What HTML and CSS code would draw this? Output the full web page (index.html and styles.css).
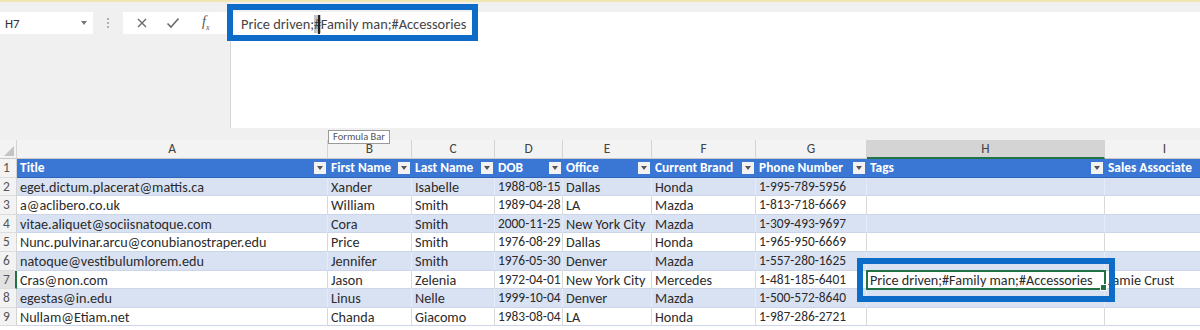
FILE: index.html
```html
<!DOCTYPE html>
<html lang="en">
<head>
    <meta charset="UTF-8">
    <title>Sales Contacts - Excel</title>
    <link rel="stylesheet" href="styles.css">
</head>
<body>

    <!-- Formula bar area -->
    <div class="formula-area">
        <div class="name-box">
            <span>H7</span>
            <span class="caret"></span>
        </div>
        <div class="grip"><i></i><i></i><i></i></div>
        <div class="fx-buttons">
            <svg class="btn-cancel" width="12" height="12" viewBox="0 0 12 12"><path d="M2 2 L10 10 M10 2 L2 10" stroke="#6b6b6b" stroke-width="1.4" fill="none"/></svg>
            <svg class="btn-enter" width="14" height="12" viewBox="0 0 14 12"><path d="M1.5 6.5 L5 10 L12.5 1.5" stroke="#6b6b6b" stroke-width="1.6" fill="none"/></svg>
            <span class="fx">f<sub>x</sub></span>
        </div>
        <div class="formula-bar">Price driven;<span class="sel">#</span><span class="cursor"></span>Family man;#Accessories</div>
    </div>

    <!-- Grid -->
    <div class="sheet">
        <div class="corner"><span></span></div>
        <div class="col-head">A</div>
        <div class="col-head">B</div>
        <div class="col-head">C</div>
        <div class="col-head">D</div>
        <div class="col-head">E</div>
        <div class="col-head">F</div>
        <div class="col-head">G</div>
        <div class="col-head active">H</div>
        <div class="col-head">I</div>

        <div class="row-head">1</div>
        <div class="cell th">Title<b class="filter"></b></div>
        <div class="cell th">First Name<b class="filter"></b></div>
        <div class="cell th">Last Name<b class="filter"></b></div>
        <div class="cell th">DOB<b class="filter"></b></div>
        <div class="cell th">Office<b class="filter"></b></div>
        <div class="cell th">Current Brand<b class="filter"></b></div>
        <div class="cell th">Phone Number<b class="filter"></b></div>
        <div class="cell th">Tags<b class="filter"></b></div>
        <div class="cell th">Sales Associate<b class="filter"></b></div>

        <div class="row-head">2</div>
        <div class="cell band">eget.dictum.placerat@mattis.ca</div>
        <div class="cell band">Xander</div>
        <div class="cell band">Isabelle</div>
        <div class="cell band num">1988-08-15</div>
        <div class="cell band">Dallas</div>
        <div class="cell band">Honda</div>
        <div class="cell band num">1-995-789-5956</div>
        <div class="cell band"></div>
        <div class="cell band"></div>

        <div class="row-head">3</div>
        <div class="cell">a@aclibero.co.uk</div>
        <div class="cell">William</div>
        <div class="cell">Smith</div>
        <div class="cell num">1989-04-28</div>
        <div class="cell">LA</div>
        <div class="cell">Mazda</div>
        <div class="cell num">1-813-718-6669</div>
        <div class="cell"></div>
        <div class="cell"></div>

        <div class="row-head">4</div>
        <div class="cell band">vitae.aliquet@sociisnatoque.com</div>
        <div class="cell band">Cora</div>
        <div class="cell band">Smith</div>
        <div class="cell band num">2000-11-25</div>
        <div class="cell band">New York City</div>
        <div class="cell band">Mazda</div>
        <div class="cell band num">1-309-493-9697</div>
        <div class="cell band"></div>
        <div class="cell band"></div>

        <div class="row-head">5</div>
        <div class="cell">Nunc.pulvinar.arcu@conubianostraper.edu</div>
        <div class="cell">Price</div>
        <div class="cell">Smith</div>
        <div class="cell num">1976-08-29</div>
        <div class="cell">Dallas</div>
        <div class="cell">Honda</div>
        <div class="cell num">1-965-950-6669</div>
        <div class="cell"></div>
        <div class="cell"></div>

        <div class="row-head">6</div>
        <div class="cell band">natoque@vestibulumlorem.edu</div>
        <div class="cell band">Jennifer</div>
        <div class="cell band">Smith</div>
        <div class="cell band num">1976-05-30</div>
        <div class="cell band">Denver</div>
        <div class="cell band">Mazda</div>
        <div class="cell band num">1-557-280-1625</div>
        <div class="cell band"></div>
        <div class="cell band"></div>

        <div class="row-head current">7</div>
        <div class="cell">Cras@non.com</div>
        <div class="cell">Jason</div>
        <div class="cell">Zelenia</div>
        <div class="cell num">1972-04-01</div>
        <div class="cell">New York City</div>
        <div class="cell">Mercedes</div>
        <div class="cell num">1-481-185-6401</div>
        <div class="cell selected">Price driven;#Family man;#Accessories</div>
        <div class="cell">Jamie Crust</div>

        <div class="row-head">8</div>
        <div class="cell band">egestas@in.edu</div>
        <div class="cell band">Linus</div>
        <div class="cell band">Nelle</div>
        <div class="cell band num">1999-10-04</div>
        <div class="cell band">Denver</div>
        <div class="cell band">Mazda</div>
        <div class="cell band num">1-500-572-8640</div>
        <div class="cell band"></div>
        <div class="cell band"></div>

        <div class="row-head">9</div>
        <div class="cell">Nullam@Etiam.net</div>
        <div class="cell">Chanda</div>
        <div class="cell">Giacomo</div>
        <div class="cell num">1983-08-04</div>
        <div class="cell">LA</div>
        <div class="cell">Honda</div>
        <div class="cell num">1-987-286-2721</div>
        <div class="cell"></div>
        <div class="cell"></div>
    </div>

    <!-- Overlays: tooltip and highlight boxes -->
    <div class="tooltip">Formula Bar</div>
    <div class="focus-box formula-focus"></div>
    <div class="focus-box cell-focus"></div>

</body>
</html>
```

FILE: styles.css
```css
body {
    margin: 0;
    width: 1200px;
    height: 330px;
    overflow: hidden;
    position: relative;
    background-color: #ffffff;
    font-family: Carlito, Lato, "Liberation Sans", sans-serif;
    color: #2b2b2b;
}

/* Formula bar */
.formula-area {
    height: 140px;
    box-sizing: border-box;
    border-top: 2px solid #efe6b4;
    background-color: #f0f0f0;
    display: flex;
    align-items: flex-start;
    padding-top: 10px;
}

.name-box {
    width: 93px;
    height: 22px;
    box-sizing: border-box;
    background-color: #fff;
    display: flex;
    align-items: center;
    justify-content: space-between;
    padding: 0 6px 0 5px;
    font-size: 13px;
    color: #333;
}

.caret {
    border-left: 3px solid transparent;
    border-right: 3px solid transparent;
    border-top: 4px solid #777;
}

.grip {
    width: 30px;
    height: 22px;
    display: flex;
    flex-direction: column;
    align-items: center;
    justify-content: center;
    gap: 2px;
}

.grip i {
    width: 2px;
    height: 2px;
    background-color: #b0b0b0;
}

.fx-buttons {
    width: 104px;
    height: 22px;
    background-color: #fff;
    display: flex;
    align-items: center;
    padding-left: 13px;
    box-sizing: border-box;
}

.btn-enter {
    margin-left: 18px;
}

.fx {
    margin-left: 22px;
    font-family: "Liberation Serif", serif;
    font-style: italic;
    font-size: 14px;
    color: #555;
}

.fx sub {
    font-size: 8px;
}

.formula-bar {
    flex: 1;
    height: 116px;
    margin-left: 3px;
    box-sizing: border-box;
    background-color: #fff;
    border-left: 1px solid #d6d6d6;
    padding: 2px 0 0 10px;
    font-size: 14.4px;
    line-height: 20px;
    color: #444;
    white-space: nowrap;
}

.sel {
    background-color: #c4c4c4;
}

.cursor {
    display: inline-block;
    width: 1.5px;
    height: 19px;
    margin-left: -3px;
    margin-right: 1px;
    vertical-align: -5px;
    background-color: #222;
}

/* Sheet grid */
.sheet {
    display: grid;
    grid-template-columns: 17px 311px 84px 83px 68px 89px 104px 111px 238px 120px;
    grid-template-rows: 19px;
    grid-auto-rows: 18.6px;
    font-size: 14.2px;
}

.corner {
    background-color: #f3f3f3;
    border-right: 1px solid #d4d4d4;
    border-bottom: 1px solid #c8c8c8;
    display: flex;
    align-items: flex-end;
    justify-content: flex-end;
    padding: 0 2px 2px 0;
}

.corner span {
    width: 0;
    height: 0;
    border-left: 10px solid transparent;
    border-bottom: 10px solid #c4c4c4;
}

.col-head {
    background-color: #f3f3f3;
    border-right: 1px solid #d4d4d4;
    border-bottom: 1px solid #c8c8c8;
    text-align: center;
    font-size: 13.4px;
    line-height: 18px;
    color: #444;
}

.col-head.active {
    background-color: #d4d4d4;
    border-bottom: 2px solid #217346;
}

.row-head {
    background-color: #f3f3f3;
    border-right: 1px solid #d4d4d4;
    border-bottom: 1px solid #dcdcdc;
    font-size: 13.4px;
    line-height: 18px;
    color: #555;
    padding-left: 3px;
}

.row-head.current {
    border-right: 2px solid #217346;
    background-color: #e2e2e2;
}

.cell {
    position: relative;
    box-sizing: border-box;
    padding-left: 3px;
    line-height: 18px;
    white-space: nowrap;
    overflow: hidden;
    background-color: #fff;
    border-right: 1px solid #d9d9d9;
    border-bottom: 1px solid #cdd6e9;
}

.cell.num {
    font-size: 13.4px;
}

.cell.band {
    background-color: #d9e2f3;
    border-right-color: #e6ecf7;
}

.cell.th {
    background-color: #3a77d4;
    color: #fff;
    font-weight: bold;
    font-size: 13.4px;
    border-right: none;
    border-bottom: 1px solid #2f66bb;
}

.filter {
    position: absolute;
    right: 2px;
    top: 3px;
    width: 12px;
    height: 12px;
    background-color: #f2f2f2;
    display: flex;
    align-items: center;
    justify-content: center;
}

.filter::after {
    content: "";
    border-left: 3px solid transparent;
    border-right: 3px solid transparent;
    border-top: 4px solid #555;
}

.cell.selected {
    overflow: visible;
    outline: 2px solid #217346;
    outline-offset: -1px;
    z-index: 1;
}

.cell.selected::after {
    content: "";
    position: absolute;
    right: -3px;
    bottom: -3px;
    width: 5px;
    height: 5px;
    background-color: #217346;
    border: 1px solid #fff;
}

/* Overlays */
.tooltip {
    position: absolute;
    left: 328px;
    top: 130px;
    width: 62px;
    height: 14px;
    box-sizing: border-box;
    background-color: #fff;
    border: 1px solid #9a9a9a;
    font-size: 10.5px;
    line-height: 12px;
    color: #555;
    text-align: center;
    z-index: 3;
}

.focus-box {
    position: absolute;
    border: 6px solid #0e6cc9;
    box-sizing: border-box;
    z-index: 2;
}

.formula-focus {
    left: 227px;
    top: 4px;
    width: 251px;
    height: 37px;
}

.cell-focus {
    left: 857px;
    top: 258px;
    width: 258px;
    height: 44px;
}
```
